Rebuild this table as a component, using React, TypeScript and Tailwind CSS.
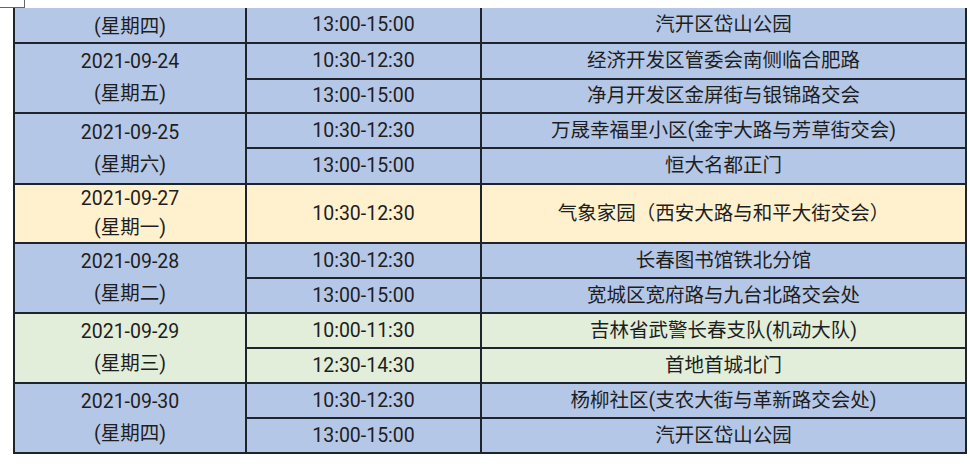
import React from "react";

type Group = { date?: string; week: string; bg: string; rows: [string, string][]; h: number[]; gap: string };

const BLUE = "bg-[#b5c7e7]";
const YELLOW = "bg-[#fff1cd]";
const GREEN = "bg-[#e2eed9]";

const groups: Group[] = [
  { week: "(星期四)", bg: BLUE, rows: [["13:00-15:00", "汽开区岱山公园"]], h: [35], gap: "pt-[3px]" },
  { date: "2021-09-24", week: "(星期五)", bg: BLUE, rows: [["10:30-12:30", "经济开发区管委会南侧临合肥路"], ["13:00-15:00", "净月开发区金屏街与银锦路交会"]], h: [36, 34], gap: "pt-[4px]" },
  { date: "2021-09-25", week: "(星期六)", bg: BLUE, rows: [["10:30-12:30", "万晟幸福里小区(金宇大路与芳草街交会)"], ["13:00-15:00", "恒大名都正门"]], h: [35, 36], gap: "pt-[4px]" },
  { date: "2021-09-27", week: "(星期一)", bg: YELLOW, rows: [["10:30-12:30", "气象家园（西安大路与和平大街交会）"]], h: [59], gap: "pt-[1px]" },
  { date: "2021-09-28", week: "(星期二)", bg: BLUE, rows: [["10:30-12:30", "长春图书馆铁北分馆"], ["13:00-15:00", "宽城区宽府路与九台北路交会处"]], h: [35, 35], gap: "pt-[4px]" },
  { date: "2021-09-29", week: "(星期三)", bg: GREEN, rows: [["10:00-11:30", "吉林省武警长春支队(机动大队)"], ["12:30-14:30", "首地首城北门"]], h: [35, 35], gap: "pt-[4px]" },
  { date: "2021-09-30", week: "(星期四)", bg: BLUE, rows: [["10:30-12:30", "杨柳社区(支农大街与革新路交会处)"], ["13:00-15:00", "汽开区岱山公园"]], h: [35, 35], gap: "pt-[4px]" },
];

export default function App() {
  return (
    <div
      className="w-[970px] h-[467px] bg-white overflow-hidden text-[#1e1e1e] text-[19.5px]"
      style={{ fontFamily: 'Roboto, "Noto Sans CJK SC", sans-serif' }}
    >
      <div className="w-[25px] h-[8px] border-r border-b border-[#666]" />
      <table className="ml-[13px] w-[954px] border-collapse table-fixed">
        <colgroup>
          <col className="w-[232px]" />
          <col className="w-[235px]" />
          <col />
        </colgroup>
        <tbody>
          {groups.map((g, gi) =>
            g.rows.map((r, ri) => (
              <tr key={`${gi}-${ri}`} style={{ height: g.h[ri] }}>
                {ri === 0 && (
                  <td
                    rowSpan={g.rows.length}
                    className={`${g.bg} border-2 border-[#1f232b] ${gi === 0 ? "border-t-0" : ""} text-center align-middle leading-[28px] p-0`}
                  >
                    {g.date && <div>{g.date}</div>}
                    <div className={g.gap}>{g.week}</div>
                  </td>
                )}
                <td className={`${g.bg} border-2 border-[#1f232b] ${gi === 0 ? "border-t-0" : ""} text-center align-middle leading-none p-0`}>
                  {r[0]}
                </td>
                <td className={`${g.bg} border-2 border-[#1f232b] ${gi === 0 ? "border-t-0" : ""} text-center align-middle leading-none p-0 whitespace-nowrap`}>
                  {r[1]}
                </td>
              </tr>
            ))
          )}
        </tbody>
      </table>
    </div>
  );
}
